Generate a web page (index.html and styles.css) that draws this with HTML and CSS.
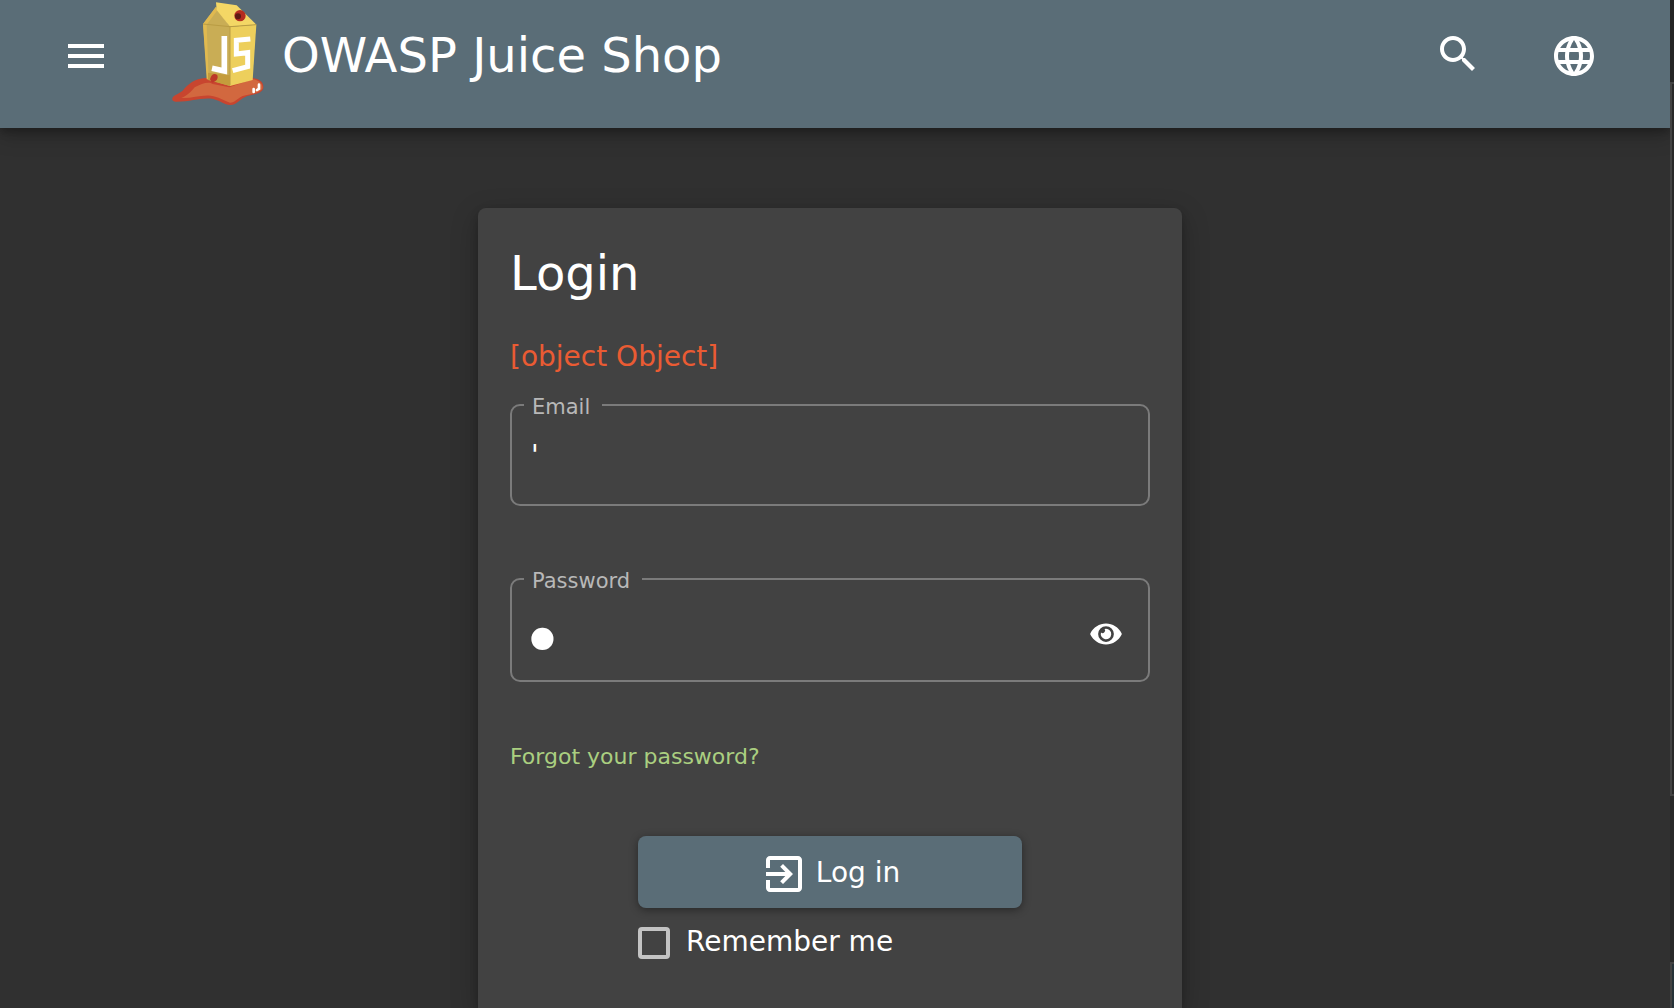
FILE: index.html
```html
<!DOCTYPE html>
<html lang="en">
<head>
<meta charset="utf-8">
<meta name="viewport" content="width=device-width, initial-scale=1">
<title>OWASP Juice Shop</title>
<link rel="stylesheet" href="styles.css">
</head>
<body>
<div class="page">
  <header class="toolbar">
    <button class="icon-button" type="button" aria-label="Open menu">
      <svg class="icon" viewBox="0 0 24 24" aria-hidden="true"><path d="M3 18h18v-2H3v2zm0-5h18v-2H3v2zm0-7v2h18V6H3z"/></svg>
    </button>
    <a class="brand" href="#">
      <svg class="logo" viewBox="60 0 276 336" aria-hidden="true">
        <path fill="#c8452f" d="M61 295C64 284 78 284 92 272C108 252 128 236 160 234L300 234C322 236 336 246 334 264C331 280 306 284 286 288C262 296 256 316 234 315C216 314 208 304 184 297C150 291 116 306 70 305C62 304 60 300 61 295Z"/>
        <path fill="#d2683f" d="M128 262C150 250 170 244 182 252L232 262L302 238C324 240 334 254 331 266C322 280 292 282 272 288C254 296 250 308 234 308C214 300 200 290 176 287C144 284 118 296 88 294C108 286 116 276 128 262Z"/>
        <path fill="#c9ad55" d="M153 72L192 20L234 80L234 258L166 238Z"/>
        <path fill="#e0b950" d="M153 72L192 20L195 32L164 74L170 238L164 238Z"/>
        <path fill="#f4d765" d="M192 7L254 16L313 74L234 80L194 30Z"/>
        <path fill="#edcf5c" d="M234 80L313 74L302 240L234 258Z"/>
        <path fill="none" stroke="#b99c43" stroke-width="3" d="M153 72L234 80L313 74M234 80V256"/>
        <path fill="#c49c3c" d="M168 218L234 226V258L168 240Z"/>
        <circle cx="264" cy="47" r="17" fill="#b52c20"/>
        <circle cx="258" cy="49" r="9" fill="#5c1a14"/>
        <path fill="#bd3929" d="M174 238C178 222 188 218 196 226C200 236 192 246 180 248Z"/>
        <path fill="none" stroke="#fff" stroke-width="17" d="M217 108V213L180 205"/>
        <path fill="none" stroke="#fff" stroke-width="15" d="M295 117L253 121V162L287 158V200L242 212"/>
        <path fill="none" stroke="#fff" stroke-width="8" stroke-linecap="round" d="M321 254V266L315 270M305 267V276"/>
      </svg>
      <span class="brand-name">OWASP Juice Shop</span>
    </a>
    <div class="actions">
      <button class="icon-button search" type="button" aria-label="Search">
        <svg class="icon" viewBox="0 0 24 24" aria-hidden="true"><path d="M15.5 14h-.79l-.28-.27C15.41 12.59 16 11.11 16 9.5 16 5.91 13.09 3 9.5 3S3 5.91 3 9.5 5.91 16 9.5 16c1.61 0 3.09-.59 4.23-1.57l.27.28v.79l5 4.99L20.49 19l-4.99-5zm-6 0C7.01 14 5 11.99 5 9.5S7.01 5 9.5 5 14 7.01 14 9.5 11.99 14 9.5 14z"/></svg>
      </button>
      <button class="icon-button" type="button" aria-label="Language">
        <svg class="icon" viewBox="0 0 24 24" aria-hidden="true"><path d="M11.99 2C6.47 2 2 6.48 2 12s4.47 10 9.99 10C17.52 22 22 17.52 22 12S17.52 2 11.99 2zm6.93 6h-2.95c-.32-1.25-.78-2.45-1.38-3.56 1.84.63 3.37 1.91 4.33 3.56zM12 4.04c.83 1.2 1.48 2.53 1.91 3.96h-3.82c.43-1.43 1.08-2.76 1.91-3.96zM4.26 14C4.1 13.36 4 12.69 4 12s.1-1.36.26-2h3.38c-.08.66-.14 1.32-.14 2s.06 1.34.14 2H4.26zm.82 2h2.95c.32 1.25.78 2.45 1.38 3.56-1.84-.63-3.37-1.9-4.33-3.56zm2.95-8H5.08c.96-1.66 2.49-2.93 4.33-3.56C8.81 5.55 8.35 6.75 8.03 8zM12 19.96c-.83-1.2-1.48-2.53-1.91-3.96h3.82c-.43 1.43-1.08 2.76-1.91 3.96zM14.34 14H9.66c-.09-.66-.16-1.32-.16-2s.07-1.35.16-2h4.68c.09.65.16 1.32.16 2s-.07 1.34-.16 2zm.25 5.56c.6-1.11 1.06-2.31 1.38-3.56h2.95c-.96 1.65-2.49 2.93-4.33 3.56zM16.36 14c.08-.66.14-1.32.14-2s-.06-1.34-.14-2h3.38c.16.64.26 1.31.26 2s-.1 1.36-.26 2h-3.38z"/></svg>
      </button>
    </div>
  </header>
  <main class="content">
    <form class="card">
      <h1 class="title">Login</h1>
      <p class="error">[object Object]</p>
      <fieldset class="field">
        <legend class="field-label"><label for="email">Email</label></legend>
        <input class="field-input" id="email" type="text" value="'">
      </fieldset>
      <fieldset class="field field-tall">
        <legend class="field-label"><label for="password">Password</label></legend>
        <input class="field-input masked" id="password" type="password" value="'">
        <button class="eye-button" type="button" aria-label="Show password">
          <svg class="eye" viewBox="0 0 576 512" aria-hidden="true"><path d="M572.52 241.4C518.29 135.59 410.93 64 288 64S57.68 135.64 3.48 241.41a32.35 32.35 0 0 0 0 29.19C57.71 376.41 165.07 448 288 448s230.32-71.64 284.52-177.41a32.35 32.35 0 0 0 0-29.19zM288 400a144 144 0 1 1 144-144 143.93 143.93 0 0 1-144 144zm0-240a95.31 95.31 0 0 0-25.31 3.79 47.85 47.85 0 0 1-66.9 66.9A95.78 95.78 0 1 0 288 160z"/></svg>
        </button>
      </fieldset>
      <a class="forgot" href="#">Forgot your password?</a>
      <div class="submit">
        <button class="login-button" type="button">
          <svg class="icon" viewBox="0 0 24 24" aria-hidden="true"><path d="M19 3H5c-1.1 0-2 .9-2 2v4h2V5h14v14H5v-4H3v4c0 1.1.9 2 2 2h14c1.1 0 2-.9 2-2V5c0-1.1-.9-2-2-2zM10.09 15.59L11.5 17l5-5-5-5-1.41 1.41L12.67 11H3v2h9.67z"/></svg>
          <span class="button-text">Log in</span>
        </button>
        <div class="remember">
          <input class="checkbox" id="remember" type="checkbox">
          <label class="remember-label" for="remember">Remember me</label>
        </div>
      </div>
    </form>
  </main>
</div>
<div class="edge">
  <div class="pane pane-top"></div>
  <div class="pane pane-main"></div>
  <div class="pane pane-gap"></div>
  <div class="pane pane-bottom"></div>
</div>
</body>
</html>
```
FILE: styles.css
```css
* {
  box-sizing: border-box;
}

body {
  margin: 0;
  min-height: 100vh;
  display: flex;
  background: #303030;
  color: #fff;
  font-family: "DejaVu Sans", sans-serif;
  font-size: 28px;
  line-height: 32px;
}

button {
  border: 0;
  padding: 0;
  background: none;
  color: inherit;
  font: inherit;
}

.page {
  flex: 1;
  display: flex;
  flex-direction: column;
  overflow: hidden;
}

.toolbar {
  display: flex;
  align-items: center;
  padding: 0 72px 16px 62px;
  background: #5a6d77;
  box-shadow: 0 4px 8px rgba(0, 0, 0, .24), 0 8px 20px rgba(0, 0, 0, .2);
}

.icon-button {
  display: flex;
}

.icon {
  width: 48px;
  height: 48px;
  fill: currentColor;
}

.brand {
  display: flex;
  align-items: center;
  gap: 18px;
  margin-left: 62px;
  color: inherit;
  text-decoration: none;
}

.logo {
  width: 92px;
  height: 112px;
}

.brand-name {
  padding-bottom: 2px;
  font-size: 48px;
  line-height: 64px;
}

.actions {
  display: flex;
  gap: 68px;
  margin-left: auto;
}

.search {
  padding-bottom: 4px;
}

.actions .icon-button {
  align-items: center;
}

.content {
  flex: 1;
  display: flex;
  justify-content: center;
  padding: 80px 10px 0 0;
}

.card {
  width: 704px;
  padding: 32px 32px 48px;
  border-radius: 8px 8px 0 0;
  background: #424242;
  box-shadow: 0 4px 8px rgba(0, 0, 0, .2), 0 8px 28px rgba(0, 0, 0, .24);
}

.title {
  margin: 0;
  font-size: 48px;
  font-weight: 400;
  line-height: 66px;
}

.error {
  margin: 35px 0 31px;
  color: #ea5b33;
}

.field {
  display: flex;
  align-items: center;
  min-width: 0;
  height: 102px;
  margin: 0 0 72px;
  padding: 0 26px 0 8px;
  border: 2px solid #7b7b7b;
  border-radius: 10px;
}

.field-tall {
  height: 104px;
}

.field-label {
  height: 2px;
  margin-left: 4px;
  padding: 0 12px 0 8px;
  color: #b8b8b8;
  font-size: 21px;
  line-height: 6px;
}

.field-input {
  flex: 1;
  min-width: 0;
  height: 48px;
  padding: 0 11px;
  border: 0;
  outline: 0;
  background: none;
  color: inherit;
  font: inherit;
}

.masked {
  height: 80px;
  margin-top: 20px;
  padding: 0;
  font-size: 76px;
}

.eye-button {
  display: flex;
  padding-top: 8px;
}

.eye {
  width: 32px;
  height: 28px;
  fill: currentColor;
}

.forgot {
  display: block;
  width: fit-content;
  margin-top: -13px;
  color: #aacf80;
  font-size: 22px;
  text-decoration: none;
}

.submit {
  width: 60%;
  margin: 63px auto 0;
}

.login-button {
  display: flex;
  align-items: center;
  justify-content: center;
  gap: 8px;
  width: 100%;
  height: 72px;
  padding-top: 4px;
  border-radius: 8px;
  background: #5a6d77;
  box-shadow: 0 2px 8px rgba(0, 0, 0, .4);
}

.button-text {
  padding-bottom: 2px;
}

.remember {
  display: flex;
  align-items: center;
  gap: 16px;
  margin-top: 18px;
}

.checkbox {
  appearance: none;
  width: 32px;
  height: 32px;
  margin: 0;
  border: 4px solid #c3c3c3;
  border-radius: 4px;
}

.remember-label {
  padding-bottom: 2px;
}

.edge {
  display: flex;
  flex-direction: column;
  width: 4px;
}

.pane {
  border: 0 solid #424242;
  background: #282828;
}

.pane-top {
  height: 82px;
  background: #242424;
}

.pane-main {
  flex: 710;
  border-width: 2px 0 2px 2px;
}

.pane-gap {
  flex: 166;
}

.pane-bottom {
  flex: 44;
  border-width: 2px 0 0 2px;
  background: #263238;
}
```
